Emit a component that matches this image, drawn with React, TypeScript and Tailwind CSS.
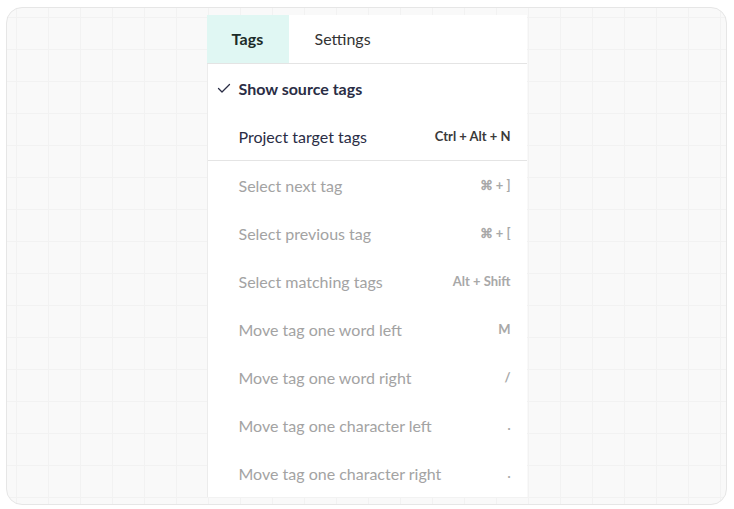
import React from 'react';

type Item = { label: string; shortcut?: string };

const top: Item[] = [
  { label: 'Show source tags' },
  { label: 'Project target tags', shortcut: 'Ctrl + Alt + N' },
];

const disabled: Item[] = [
  { label: 'Select next tag', shortcut: '⌘ + ]' },
  { label: 'Select previous tag', shortcut: '⌘ + [' },
  { label: 'Select matching tags', shortcut: 'Alt + Shift' },
  { label: 'Move tag one word left', shortcut: 'M' },
  { label: 'Move tag one word right', shortcut: '/' },
  { label: 'Move tag one character left', shortcut: '.' },
  { label: 'Move tag one character right', shortcut: '.' },
];

const Check = () => (
  <svg width="14" height="14" viewBox="0 0 14 14" className="absolute left-[9px] top-1/2 -translate-y-1/2" fill="none">
    <path d="M1.5 7.5 L5 11 L12.5 3.5" stroke="#2a2d45" strokeWidth="1.3" strokeLinecap="round" strokeLinejoin="round" />
  </svg>
);

export default function App() {
  return (
    <div className="min-h-screen bg-white pt-[7px] pl-[6px] pr-[7px] font-['Lato','Liberation_Sans',sans-serif]">
      <div className="h-[498px] rounded-[16px] border border-[#e6e6e6] bg-[#f9f9f9] flex justify-center py-[7px] bg-[linear-gradient(to_right,#f2f2f2_1px,transparent_1px),linear-gradient(to_bottom,#f2f2f2_1px,transparent_1px)] bg-[size:32px_32px] bg-[position:9px_9px]">
        <div className="w-[320px] bg-white flex flex-col">
          <div className="flex h-[49px] border-b border-[#e4e4e4]">
            <div className="w-[82px] flex items-center justify-center bg-[#e0f7f3] text-[16px] font-bold text-[#1c2b28] tracking-[0.2px]">Tags</div>
            <div className="px-[26px] flex items-center text-[16px] text-[#333]">Settings</div>
          </div>
          <div className="flex-1 border-l border-[#ececec]">
            {top.map((it, i) => (
              <div key={i} className="relative h-[48px] flex items-center justify-between pl-[31px] pr-[16px] pt-[2px]">
                {i === 0 && <Check />}
                <span className={`text-[16px] text-[#2a2d45] ${i === 0 ? 'font-bold' : ''}`}>{it.label}</span>
                {it.shortcut && <span className="text-[13px] font-bold text-[#3a3a3a]">{it.shortcut}</span>}
              </div>
            ))}
            <div className="h-px bg-[#e4e4e4]" />
            {disabled.map((it, i) => (
              <div key={i} className="h-[48px] flex items-center justify-between pl-[31px] pr-[16px] pt-[2px]">
                <span className="text-[16px] text-[#a3a3a3]">{it.label}</span>
                <span className="text-[13px] font-bold text-[#a8a8a8]">{it.shortcut}</span>
              </div>
            ))}
          </div>
        </div>
      </div>
    </div>
  );
}
